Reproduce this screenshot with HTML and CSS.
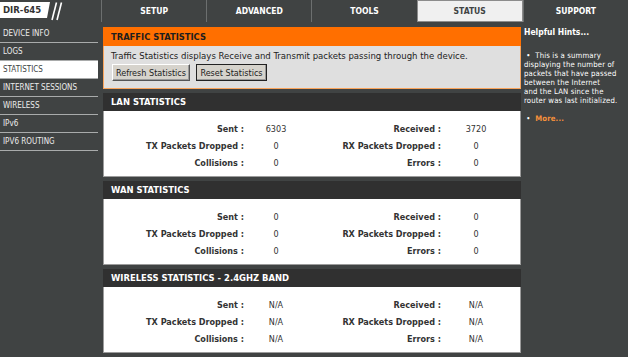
FILE: index.html
```html
<!DOCTYPE html>
<html lang="en">
<head>
    <meta charset="UTF-8">
    <title>D-Link DIR-645 - Status / Statistics</title>
    <link rel="stylesheet" href="styles.css">
</head>
<body>
<div class="topbar">
    <div class="logo">
        <span class="model">DIR-645</span>
        <svg class="slashes" width="14" height="22" viewBox="0 0 14 22">
            <line x1="1" y1="20" x2="5.5" y2="2.5" stroke="#fff" stroke-width="1.6"/>
            <line x1="6" y1="20" x2="10.5" y2="2.5" stroke="#fff" stroke-width="1.6"/>
        </svg>
    </div>
    <div class="tabs">
        <div class="tab">SETUP</div>
        <div class="tab">ADVANCED</div>
        <div class="tab">TOOLS</div>
        <div class="tab active">STATUS</div>
        <div class="tab">SUPPORT</div>
    </div>
</div>

<div class="main">
    <ul class="nav">
        <li>DEVICE INFO</li>
        <li>LOGS</li>
        <li class="selected">STATISTICS</li>
        <li>INTERNET SESSIONS</li>
        <li>WIRELESS</li>
        <li>IPv6</li>
        <li>IPV6 ROUTING</li>
    </ul>

    <div class="content">
        <div class="intro">
            <div class="intro-head">TRAFFIC STATISTICS</div>
            <div class="intro-body">
                <p>Traffic Statistics displays Receive and Transmit packets passing through the device.</p>
                <div class="actions">
                    <button type="button" class="btn btn-refresh">Refresh Statistics</button>
                    <button type="button" class="btn btn-reset">Reset Statistics</button>
                </div>
            </div>
        </div>

        <div class="stat-box">
            <div class="stat-head">LAN STATISTICS</div>
            <div class="stat-grid">
                <span class="lbl">Sent :</span><span class="val">6303</span>
                <span class="lbl">Received :</span><span class="val">3720</span>
                <span class="lbl">TX Packets Dropped :</span><span class="val">0</span>
                <span class="lbl">RX Packets Dropped :</span><span class="val">0</span>
                <span class="lbl">Collisions :</span><span class="val">0</span>
                <span class="lbl">Errors :</span><span class="val">0</span>
            </div>
        </div>

        <div class="stat-box">
            <div class="stat-head">WAN STATISTICS</div>
            <div class="stat-grid">
                <span class="lbl">Sent :</span><span class="val">0</span>
                <span class="lbl">Received :</span><span class="val">0</span>
                <span class="lbl">TX Packets Dropped :</span><span class="val">0</span>
                <span class="lbl">RX Packets Dropped :</span><span class="val">0</span>
                <span class="lbl">Collisions :</span><span class="val">0</span>
                <span class="lbl">Errors :</span><span class="val">0</span>
            </div>
        </div>

        <div class="stat-box">
            <div class="stat-head">WIRELESS STATISTICS - 2.4GHZ BAND</div>
            <div class="stat-grid">
                <span class="lbl">Sent :</span><span class="val">N/A</span>
                <span class="lbl">Received :</span><span class="val">N/A</span>
                <span class="lbl">TX Packets Dropped :</span><span class="val">N/A</span>
                <span class="lbl">RX Packets Dropped :</span><span class="val">N/A</span>
                <span class="lbl">Collisions :</span><span class="val">N/A</span>
                <span class="lbl">Errors :</span><span class="val">N/A</span>
            </div>
        </div>
    </div>

    <div class="hints">
        <div class="hints-title">Helpful Hints...</div>
        <ul class="hints-list">
            <li>&nbsp;&bull;&nbsp; This is a summary<br>displaying the number of<br>packets that have passed<br>between the Internet<br>and the LAN since the<br>router was last initialized.</li>
            <li class="more">&nbsp;&bull;&nbsp; <span>More...</span></li>
        </ul>
    </div>
</div>
</body>
</html>
```

FILE: styles.css
```css
body { margin: 0; background: #404343; font-family: "DejaVu Sans Condensed", "Liberation Sans", sans-serif; color: #333; overflow: hidden; }
ul { list-style: none; margin: 0; padding: 0; }

.topbar { display: flex; height: 22px; }
.logo { width: 101px; display: flex; align-items: flex-start; }
.model { margin-top: 2px; height: 16px; width: 50px; box-sizing: border-box; padding-left: 3px; background: #fff; color: #333; font-size: 9.5px; font-weight: bold; line-height: 16px; clip-path: polygon(0 0, 100% 0, 94% 100%, 0 100%); }
.slashes { margin-left: 1px; }
.tabs { flex: 1; display: flex; }
.tab { flex: 1; display: flex; align-items: center; justify-content: center; border-left: 1px solid #6c6f6f; color: #fff; font-size: 8.5px; font-weight: bold; }
.tab.active { background: #f0f0f0; color: #404343; border: 1px solid #8c8c8c; height: 20px; }

.main { display: flex; }
.nav { width: 98px; padding-top: 3px; }
.nav li { height: 17px; line-height: 18px; padding-left: 3px; border-bottom: 1px solid #a9abab; color: #ececec; font-size: 8px; }
.nav li.selected { background: #fff; color: #404343; }

.content { width: 418px; margin-left: 5px; padding-top: 5px; }
.intro { border: 1px solid #f9a45c; margin-bottom: 4px; }
.intro-head { height: 19px; line-height: 19px; margin: -1px -1px 0; padding-left: 8px; background: #ff6f00; color: #1e1e1e; font-size: 9.3px; font-weight: bold; }
.intro-body { background: #dfdfdf; padding: 5px 0 7px 7px; }
.intro-body p { margin: 0; height: 10px; line-height: 10px; font-size: 9.5px; color: #222; }
.actions { display: flex; gap: 6px; margin-top: 3px; padding-left: 1px; }
.btn { height: 17px; padding: 0; font-family: inherit; font-size: 9px; color: #222; background: #d6d3cc; border: 1px solid; border-color: #fff #555 #555 #fff; box-shadow: inset -1px -1px #9a9a9a; }
.btn-refresh { width: 78px; }
.btn-reset { width: 71px; outline: 1px solid #222; outline-offset: -1px; }

.stat-box { margin-bottom: 4px; }
.stat-head { height: 18px; line-height: 18px; padding-left: 8px; background: #303030; color: #fff; font-size: 9.4px; font-weight: bold; }
.stat-grid { display: grid; grid-template-columns: 140px 64px 133px 70px; grid-auto-rows: 17px; padding: 10px 0 4px; background: #fff; border: 1px solid #9c9c9c; border-top: none; }
.lbl { text-align: right; font-size: 9px; font-weight: bold; line-height: 17px; color: #333; }
.val { text-align: center; font-size: 9px; line-height: 17px; color: #333; }

.hints { width: 105px; margin-left: 2px; padding: 5px 0 0 1px; box-sizing: border-box; color: #fff; }
.hints-title { font-size: 8.5px; font-weight: bold; line-height: 10px; }
.hints-list { margin-top: 14px; font-size: 7.7px; letter-spacing: 0.15px; line-height: 9px; white-space: nowrap; }
.hints-list li { margin-bottom: 9px; }
.hints-list .more span { color: #f7913b; font-weight: bold; }
```
